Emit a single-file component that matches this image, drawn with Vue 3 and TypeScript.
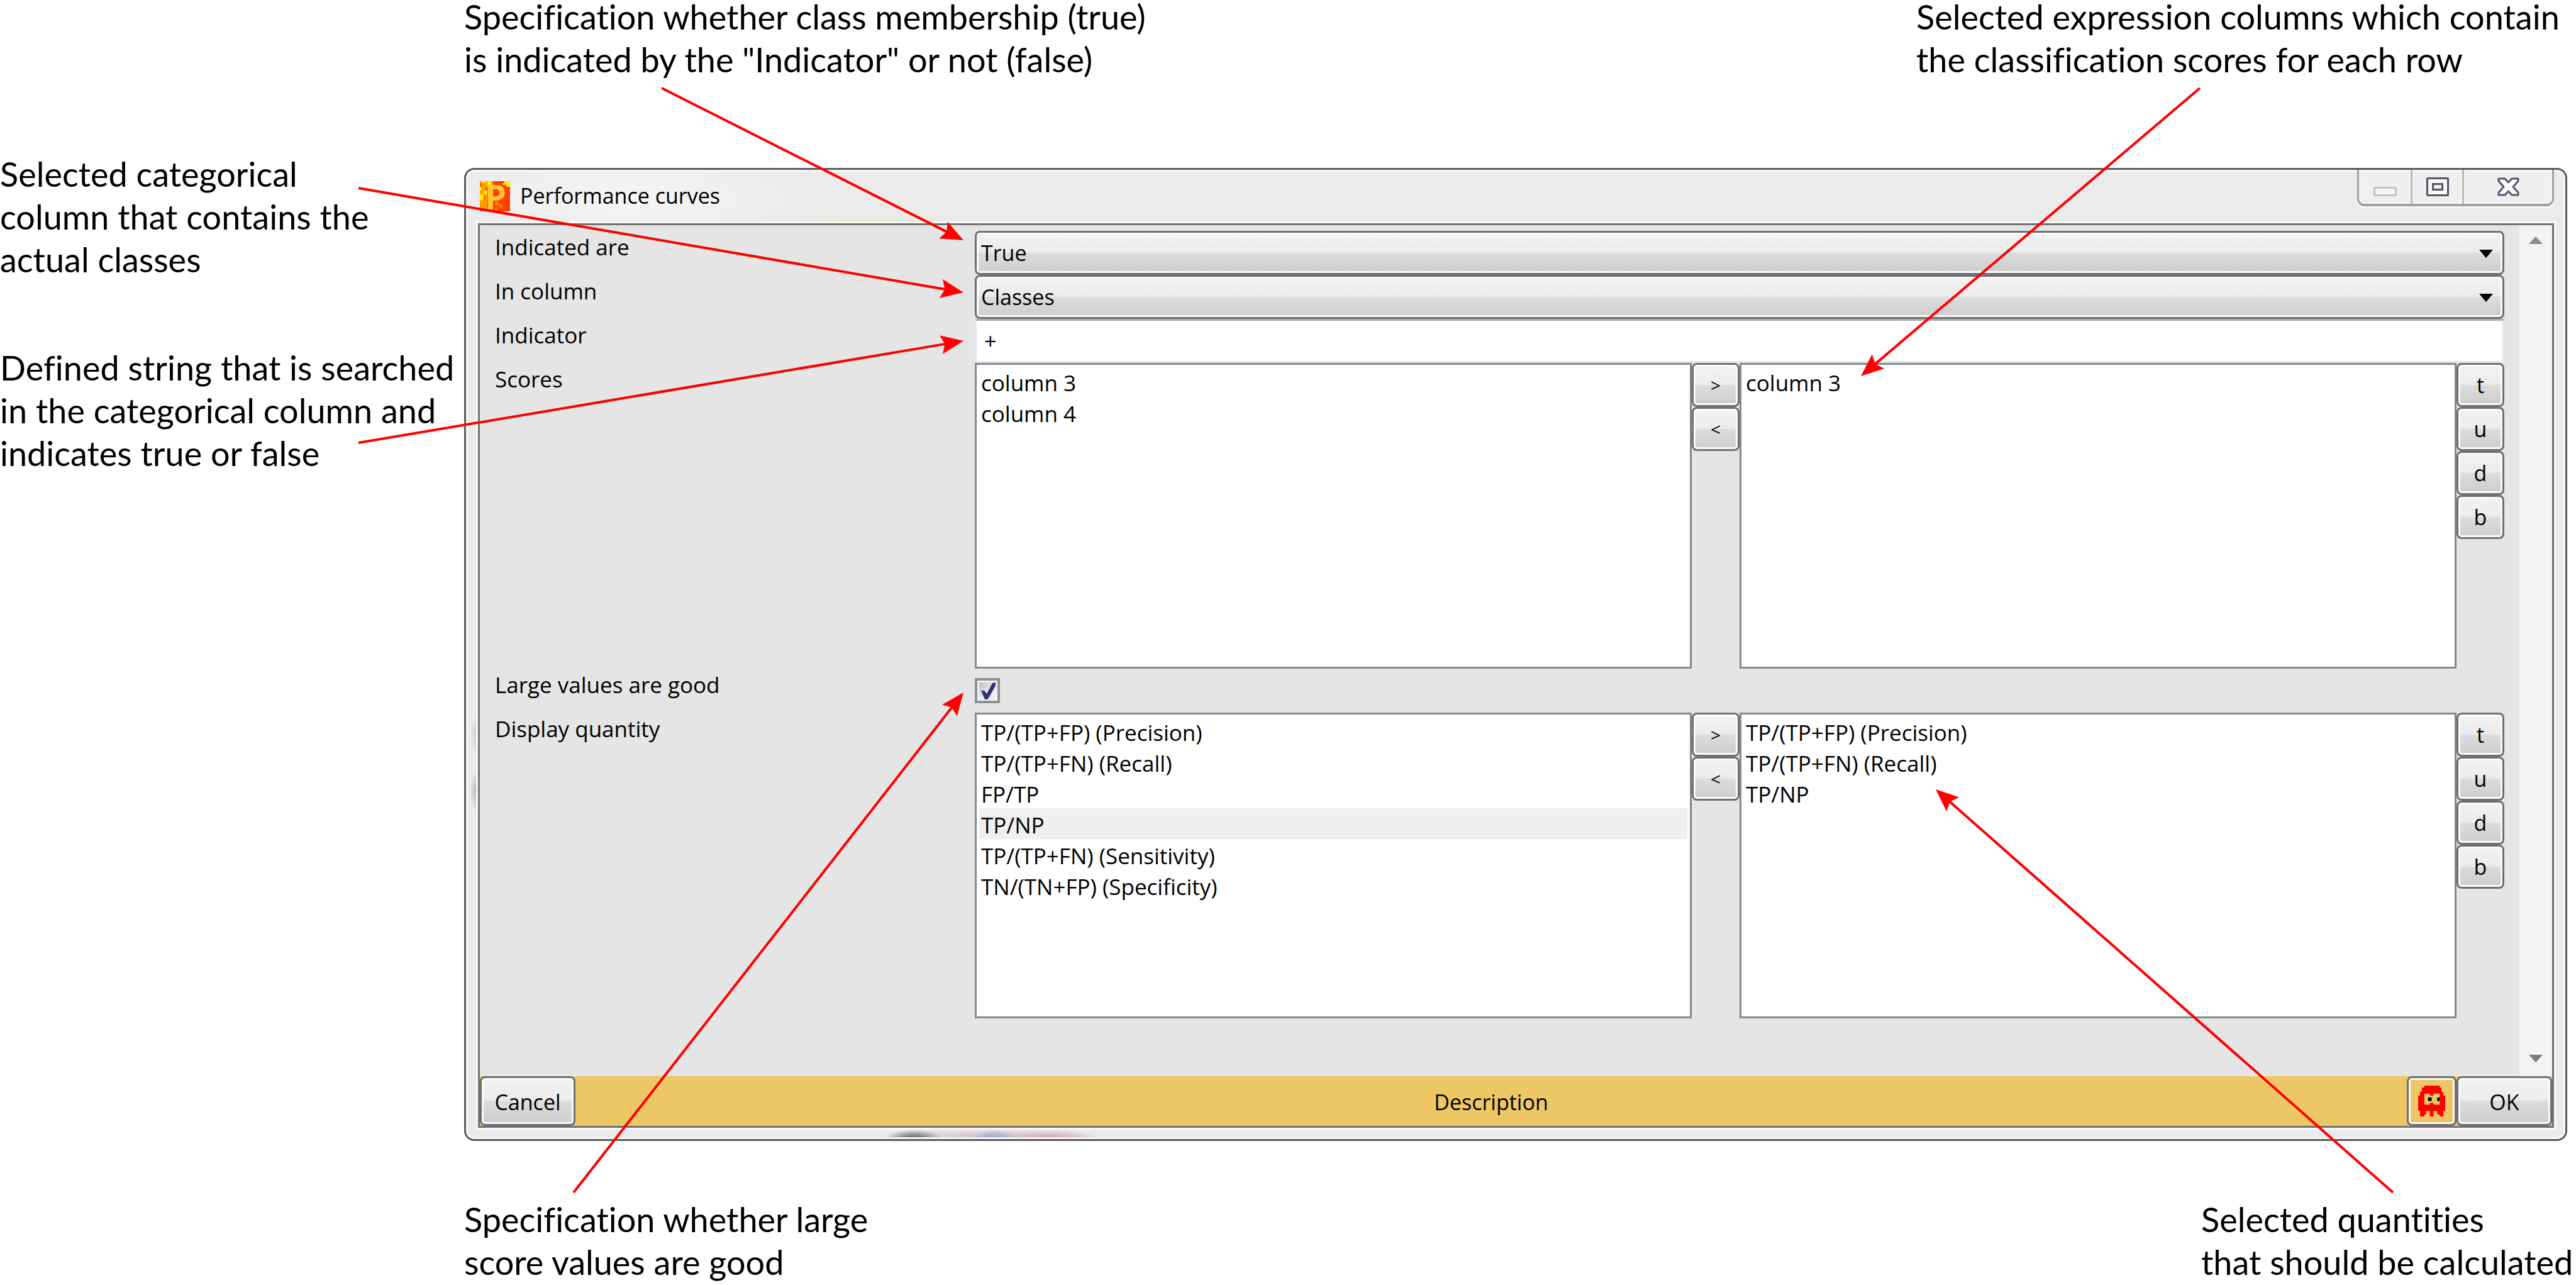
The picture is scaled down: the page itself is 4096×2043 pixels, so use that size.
<script setup lang="ts">
import { ref } from 'vue'

interface Arrow {
  from: [number, number]
  to: [number, number]
}

interface Picker {
  id: string
  available: string[]
  chosen: string[]
  current: number
}

const indicatedAre = ref('True')
const inColumn = ref('Classes')
const indicator = ref('+')
const largeIsGood = ref(true)

const scores: Picker = {
  id: 'scores',
  available: ['column 3', 'column 4'],
  chosen: ['column 3'],
  current: -1,
}

const quantities: Picker = {
  id: 'quantity',
  available: [
    'TP/(TP+FP) (Precision)',
    'TP/(TP+FN) (Recall)',
    'FP/TP',
    'TP/NP',
    'TP/(TP+FN) (Sensitivity)',
    'TN/(TN+FP) (Specificity)',
  ],
  chosen: ['TP/(TP+FP) (Precision)', 'TP/(TP+FN) (Recall)', 'TP/NP'],
  current: 3,
}

const moves = ['>', '<']
const orders = ['t', 'u', 'd', 'b']

const arrows: Arrow[] = [
  { from: [1052, 140], to: [1532, 382] },
  { from: [570, 299], to: [1532, 465] },
  { from: [570, 704], to: [1532, 542] },
  { from: [3498, 140], to: [2959, 598] },
  { from: [912, 1896], to: [1532, 1101] },
  { from: [3805, 1896], to: [3078, 1255] },
]

function length(a: Arrow): number {
  return Math.hypot(a.to[0] - a.from[0], a.to[1] - a.from[1])
}

function placement(a: Arrow): string {
  const angle = (Math.atan2(a.to[1] - a.from[1], a.to[0] - a.from[0]) * 180) / Math.PI
  return `translate(${a.to[0]} ${a.to[1]}) rotate(${angle})`
}
</script>

<template>
  <main class="figure">
    <aside class="side-notes">
      <p>Selected categorical<br />column that contains the<br />actual classes</p>
      <p>Defined string that is searched<br />in the categorical column and<br />indicates true or false</p>
    </aside>

    <div class="center">
      <div class="notes top">
        <p>Specification whether class membership (true)<br />is indicated by the "Indicator" or not (false)</p>
        <p class="wide">Selected expression columns which contain<br />the classification scores for each row</p>
      </div>

      <section class="window" aria-labelledby="window-title">
        <header class="titlebar">
          <svg class="app-icon" viewBox="0 0 48 48" aria-hidden="true">
            <rect width="48" height="48" fill="#ff4000" />
            <path d="M0 0H21V6H18V15H12V48H0Z" fill="#ff9c00" />
            <path d="M3 0H9V3H3ZM12 0H18V6H12ZM0 9H3V15H0ZM6 15H12V21H6ZM0 21H6V30H0ZM39 0H48V9H42V6H36V3H39Z" fill="#ffee00" />
            <path d="M0 3H3V9H0ZM9 9H12V15H9ZM6 24H9V30H6Z" fill="#ff5a00" />
            <path d="M24 33H30V39H24ZM30 36H36V42H30ZM24 42H27V48H24ZM36 12H39V15H36Z" fill="#ff7a00" />
            <text x="8" y="45" class="app-letter">P</text>
          </svg>
          <h1 id="window-title">Performance curves</h1>
          <div class="caption-buttons">
            <button type="button" class="min" aria-label="Minimize">
              <svg width="37" height="15" viewBox="0 0 37 15">
                <rect x="1.5" y="1.5" width="34" height="12" rx="1" fill="#f5f5f5" stroke="#c2c2c2" stroke-width="3" />
              </svg>
            </button>
            <button type="button" class="max" aria-label="Maximize">
              <svg width="36" height="30" viewBox="0 0 36 30">
                <rect x="1.5" y="1.5" width="33" height="27" rx="1" fill="#fafafa" stroke="#53566b" stroke-width="3" />
                <rect x="10.5" y="10.5" width="15" height="9" fill="#f0f0f0" stroke="#53566b" stroke-width="3" />
              </svg>
            </button>
            <button type="button" class="close" aria-label="Close">
              <svg width="35" height="30" viewBox="0 0 35 30">
                <path
                  d="M2 2H12L17.500 8L23 2H33V6L25 15L33 24V28H23L17.500 22L12 28H2V24L10 15L2 6Z"
                  fill="#fafafa" stroke="#53566b" stroke-width="3" stroke-linejoin="round"
                />
              </svg>
            </button>
          </div>
        </header>

        <form class="client" @submit.prevent>
          <div class="body">
            <div class="fields">
              <label for="indicated">Indicated are</label>
              <div class="combo">
                <select id="indicated" v-model="indicatedAre">
                  <option>True</option>
                  <option>False</option>
                </select>
                <svg class="drop" viewBox="0 0 22 13"><path d="M0 0H22L11 13Z" /></svg>
              </div>

              <label for="column">In column</label>
              <div class="combo">
                <select id="column" v-model="inColumn">
                  <option>Classes</option>
                </select>
                <svg class="drop" viewBox="0 0 22 13"><path d="M0 0H22L11 13Z" /></svg>
              </div>

              <label for="indicator">Indicator</label>
              <input id="indicator" v-model="indicator" class="textbox" type="text" />

              <template v-for="(picker, n) in [scores, quantities]" :key="picker.id">
                <template v-if="n === 1">
                  <label for="large">Large values are good</label>
                  <div class="check-cell">
                    <input id="large" v-model="largeIsGood" type="checkbox" />
                    <svg v-if="largeIsGood" viewBox="0 0 40 40" aria-hidden="true">
                      <path d="M10 20H15L19 25L28 8L33 7V12L23 30L20 34H16Z" fill="#31347c" />
                    </svg>
                  </div>
                </template>
                <span :id="picker.id" class="label">{{ n === 0 ? 'Scores' : 'Display quantity' }}</span>
                <div class="picker">
                  <ul role="listbox" :aria-labelledby="picker.id">
                    <li
                      v-for="(item, i) in picker.available"
                      :key="item"
                      role="option"
                      :class="{ current: i === picker.current }"
                    >{{ item }}</li>
                  </ul>
                  <div class="stack">
                    <button v-for="m in moves" :key="m" type="button" class="btn arrow-btn">{{ m }}</button>
                  </div>
                  <ul role="listbox" :aria-labelledby="picker.id">
                    <li v-for="item in picker.chosen" :key="item" role="option">{{ item }}</li>
                  </ul>
                  <div class="stack">
                    <button v-for="o in orders" :key="o" type="button" class="btn">{{ o }}</button>
                  </div>
                </div>
              </template>
            </div>

            <div class="scrollbar">
              <button type="button" aria-label="Scroll up">
                <svg viewBox="0 0 22 12"><path d="M11 0L22 12H0Z" fill="#8c8c8c" /></svg>
              </button>
              <button type="button" aria-label="Scroll down">
                <svg viewBox="0 0 22 12"><path d="M0 0H22L11 12Z" fill="#7c7c7c" /></svg>
              </button>
            </div>
          </div>

          <footer class="actions">
            <button type="button" class="btn cancel">Cancel</button>
            <span class="description">Description</span>
            <button type="button" class="btn ghost" aria-label="Report a problem">
              <svg viewBox="0 0 132 150">
                <path
                  fill="#f00" fill-rule="evenodd"
                  d="M30 0H105V9H114V30H123V48H132V123H123V150H105V141H93V123H75V150H57V123H39V141H30V150H9V123H0V48H9V30H18V9H30ZM30 39V93H57V84H75V93H105V39H75V48H57V39Z"
                />
                <path d="M48 57H66V75H48ZM93 57H105V75H93Z" fill="#000" />
              </svg>
            </button>
            <button type="submit" class="btn ok">OK</button>
          </footer>
        </form>
      </section>

      <div class="notes bottom">
        <p>Specification whether large<br />score values are good</p>
        <p class="narrow">Selected quantities<br />that should be calculated</p>
      </div>
    </div>

    <svg class="arrows" viewBox="0 0 4096 2043" preserveAspectRatio="none" aria-hidden="true">
      <g v-for="(a, i) in arrows" :key="i" :transform="placement(a)">
        <path :d="`M${-length(a)} 0H-28`" stroke="#f00" stroke-width="4" />
        <path d="M0 0L-36 -15L-30 0L-36 15Z" fill="#f00" />
      </g>
    </svg>
  </main>
</template>

<style>
body {
  margin: 0;
  background: #fff;
}
</style>

<style scoped>
* {
  box-sizing: border-box;
}

.figure {
  position: relative;
  display: grid;
  grid-template-columns: 738px 1fr;
  min-height: 100vh;
  color: #000;
  font: 34px/46px 'Open Sans', 'Noto Sans', sans-serif;
}

p,
h1,
ul {
  margin: 0;
  padding: 0;
}

.side-notes,
.notes {
  font: 54px/68px Lato, 'Open Sans', sans-serif;
  font-variant-ligatures: none;
  white-space: nowrap;
}

.side-notes {
  display: flex;
  flex-direction: column;
  gap: 104px;
  padding-top: 243px;
}

.center {
  min-width: 0;
}

.notes {
  display: flex;
  justify-content: space-between;
}

.notes.top {
  height: 274px;
  margin-top: -7px;
}

.notes.bottom {
  padding-top: 91px;
}

.wide {
  width: 1049px;
}

.narrow {
  width: 596px;
}

.window {
  margin-right: 14px;
  padding: 0 18px 18px 19px;
  border: 3px solid #5b5b5b;
  border-radius: 16px;
  box-shadow: inset 0 0 0 3px #f9f9f9;
  background:
    radial-gradient(ellipse 170px 16px at 650px 84px, #e8e8d0, transparent),
    radial-gradient(ellipse 14px 34px at 20px 898px, #b9cdb9, transparent),
    radial-gradient(ellipse 14px 36px at 20px 988px, #9aa6b2, transparent),
    radial-gradient(ellipse 46px 14px at 712px 1540px, #5c5458, transparent),
    radial-gradient(ellipse 36px 14px at 840px 1540px, #8aa8d0, transparent),
    radial-gradient(ellipse 80px 14px at 930px 1540px, #d0a8b4, transparent),
    radial-gradient(ellipse 180px 18px at 830px 1541px, #d0b8c4, transparent),
    radial-gradient(ellipse 300px 60px at 250px 44px, #f6f6f6, transparent),
    #ebebeb;
}

.titlebar {
  display: flex;
  height: 85px;
}

.app-icon {
  width: 48px;
  height: 48px;
  margin: 18px 16px 0 3px;
  overflow: visible;
}

.app-letter {
  font: 700 54px 'Open Sans', sans-serif;
  fill: #ffc82d;
}

h1 {
  padding-top: 18px;
  font-size: 34px;
  font-weight: 400;
  line-height: 46px;
}

.caption-buttons {
  display: flex;
  height: 58px;
  margin-left: auto;
  border: solid #a0a0a0;
  border-width: 0 3px 4px;
  border-radius: 0 0 12px 12px;
  box-shadow: 0 3px 0 #f8f8f8;
}

.caption-buttons button {
  display: flex;
  align-items: flex-start;
  justify-content: center;
  padding: 12px 0 0;
  border: 0;
  background: #efefef;
  box-shadow: inset 0 0 0 2px #f7f7f7;
}

.caption-buttons .min {
  width: 85px;
  padding-top: 27px;
  border-right: 3px solid #b8b8b8;
  border-radius: 0 0 0 9px;
}

.caption-buttons .max {
  width: 82px;
  border-right: 3px solid #b8b8b8;
}

.caption-buttons .close {
  width: 140px;
  border-radius: 0 0 9px;
}

.client {
  border: 3px solid #717171;
  box-shadow: 0 0 0 3px #f8f8f8;
  background: #e5e5e5;
}

.body {
  display: flex;
}

.fields {
  display: grid;
  flex: 1;
  grid-template-columns: 763px 1fr;
  padding: 9px 24px 92px;
}

.fields > label,
.label {
  padding-top: 3px;
  font-size: 35px;
}

.combo {
  position: relative;
  height: 70px;
}

select,
.btn {
  border: 3px solid #707070;
  border-radius: 8px;
  box-shadow: inset 0 0 0 3px #fafafa;
  background: linear-gradient(#f3f3f3, #ebebeb 49%, #dddddd 50%, #cdcdcd);
  color: #000;
  font: inherit;
}

select {
  width: 100%;
  height: 70px;
  padding: 0 60px 0 7px;
  appearance: none;
}

.drop {
  position: absolute;
  top: 30px;
  right: 18px;
  width: 22px;
  height: 13px;
  pointer-events: none;
}

.textbox {
  width: 100%;
  height: 70px;
  padding: 0 12px;
  border: 3px solid #e3e8ef;
  border-top-color: #abadb3;
  background: #fff;
  color: #000;
  font: inherit;
}

.picker {
  display: flex;
  height: 486px;
}

ul {
  flex: 1;
  padding: 2px 4px;
  border: 3px solid #828790;
  background: #fff;
  font-size: 35px;
  line-height: 45px;
  list-style: none;
}

li {
  padding: 4px 3px 0;
}

.current {
  background: #efefef;
}

.stack {
  display: flex;
  flex-direction: column;
  width: 76px;
}

.btn {
  height: 70px;
  padding: 0;
}

.arrow-btn {
  font-size: 28px;
}

.check-cell {
  display: grid;
  height: 70px;
  padding-top: 15px;
  grid-template: 40px / 40px;
}

.check-cell input,
.check-cell svg {
  grid-area: 1 / 1;
  width: 40px;
  height: 40px;
  margin: 0;
}

.check-cell svg {
  pointer-events: none;
}

.check-cell input {
  appearance: none;
  border: 4px solid #8e8f8f;
  box-shadow: inset 0 0 0 3px #f4f4f4;
  background: linear-gradient(135deg, #aeb3b9, #e6e7ea 50%, #f6f6f6);
}

.scrollbar {
  display: flex;
  flex-direction: column;
  justify-content: space-between;
  width: 52px;
  padding-bottom: 4px;
  background: #f3f3f3;
}

.scrollbar button {
  height: 48px;
  padding: 0;
  border: 0;
  background: none;
}

.scrollbar svg {
  display: block;
  width: 22px;
  height: 12px;
  margin: 0 auto;
}

.actions {
  display: flex;
  align-items: center;
  height: 79px;
  background: #edc764;
}

.actions .btn {
  height: 79px;
}

.description {
  flex: 1;
  padding-top: 2px;
  text-align: center;
}

.actions .cancel,
.actions .ok {
  width: 152px;
  padding-top: 2px;
}

.actions .ghost {
  display: grid;
  place-items: center;
  width: 79px;
  background: #edc764;
}

.ghost svg {
  width: 43px;
  height: 49px;
}

.arrows {
  position: absolute;
  inset: 0;
  width: 100%;
  height: 100%;
  pointer-events: none;
}
</style>
